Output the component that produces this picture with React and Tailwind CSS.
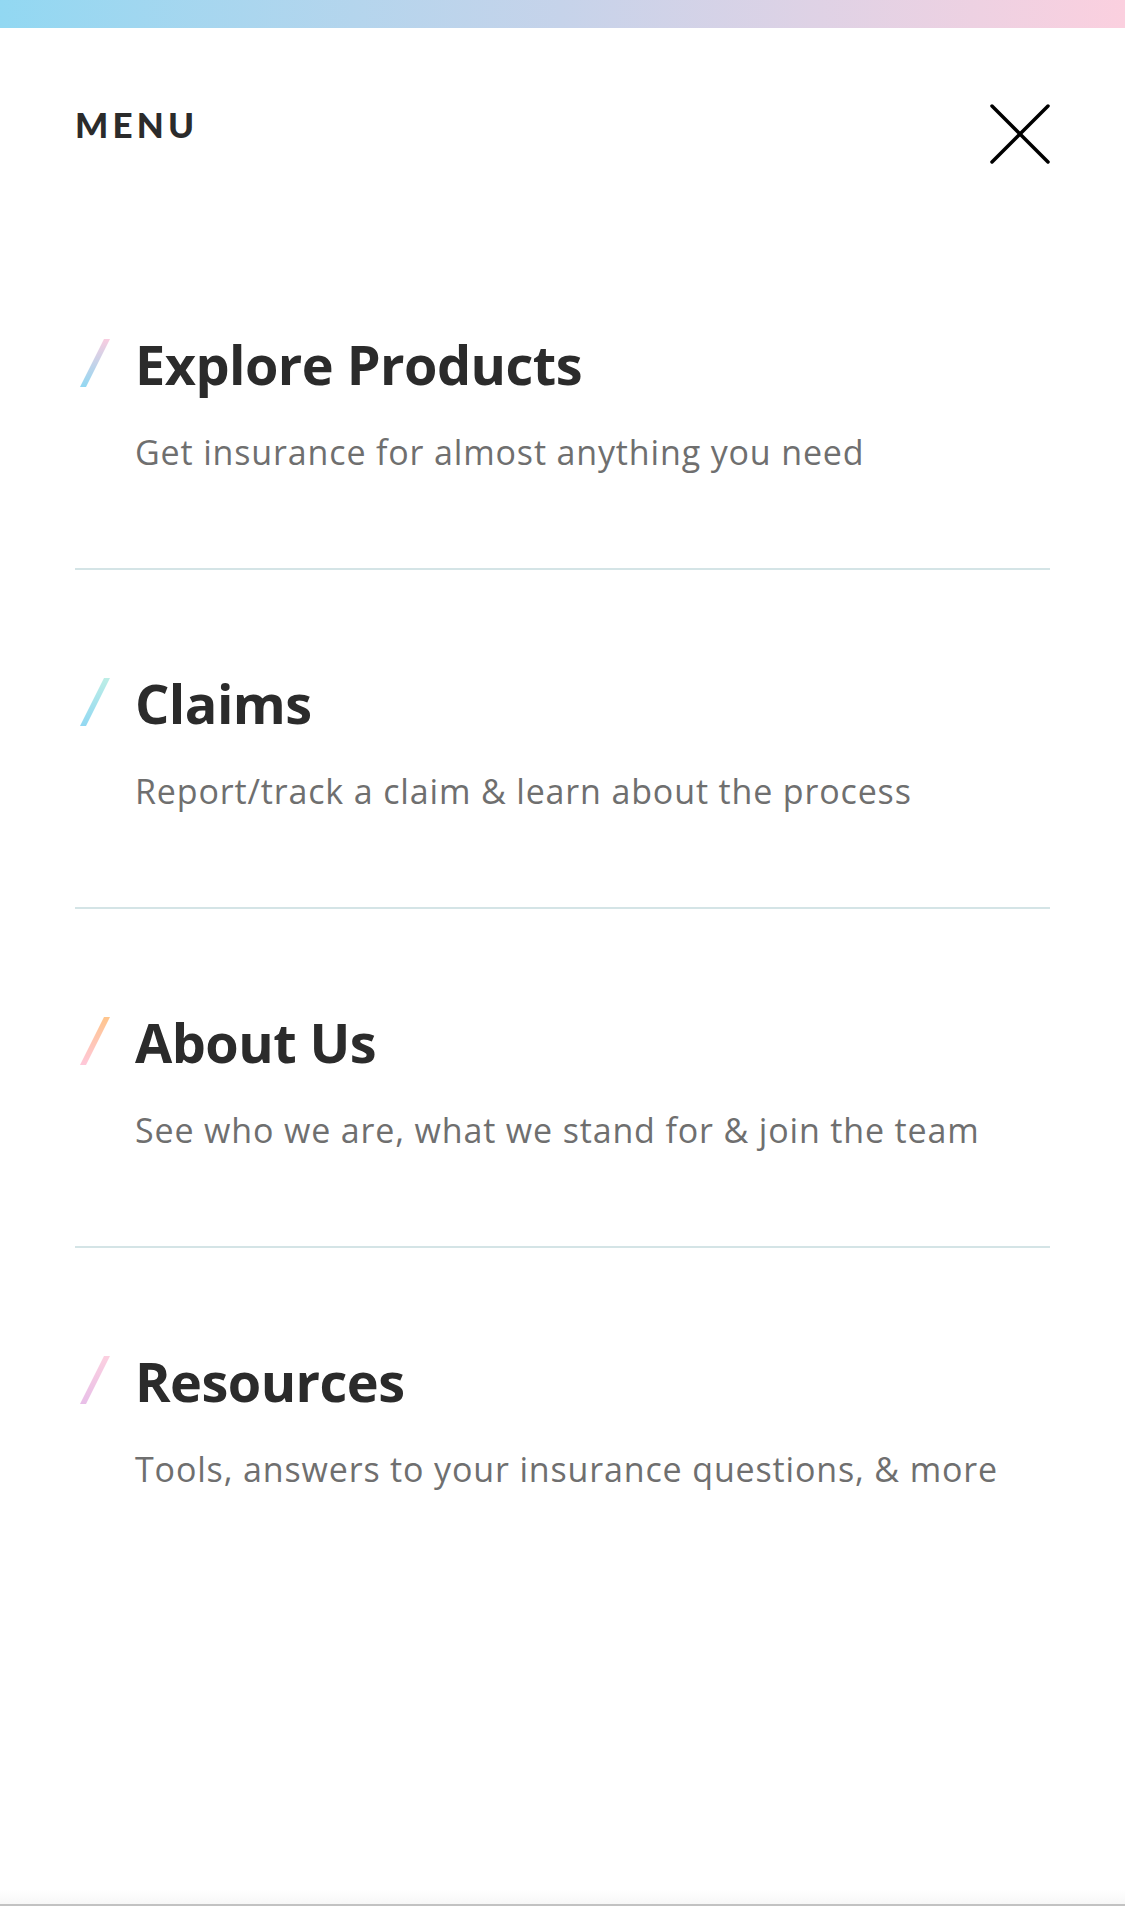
import React from 'react';

const items = [
  { title: 'Explore Products', text: 'Get insurance for almost anything you need', from: '#f9cde0', to: '#92d8f2' },
  { title: 'Claims', text: 'Report/track a claim & learn about the process', from: '#bdeee6', to: '#92d8f2' },
  { title: 'About Us', text: 'See who we are, what we stand for & join the team', from: '#ffc58c', to: '#ffc8da' },
  { title: 'Resources', text: 'Tools, answers to your insurance questions, & more', from: '#fcd0e0', to: '#e8bfe8' },
];

// barra inclinada com degradê antes de cada título
const Slash = ({ id, from, to }) => (
  <svg width="32" height="50" viewBox="0 0 32 50" className="block">
    <defs>
      <linearGradient id={id} x1="0" y1="0" x2="0" y2="1">
        <stop offset="0%" stopColor={from} />
        <stop offset="100%" stopColor={to} />
      </linearGradient>
    </defs>
    <polygon points="25,1 31,1 7,49 1,49" fill={`url(#${id})`} />
  </svg>
);

const MenuItem = ({ item, index, last }) => (
  <div className={`pt-[106px] ${last ? '' : 'pb-[99px] border-b-2 border-[#d4e4e6]'}`}>
    <div className="flex items-start">
      <div className="w-[60px] shrink-0 pt-[1px] pl-[4px]">
        <Slash id={`slash-${index}`} from={item.from} to={item.to} />
      </div>
      <h2 className="text-[54px] leading-none font-bold text-[#2b2b2b] tracking-[-0.01em]">{item.title}</h2>
    </div>
    <p className="pl-[60px] mt-[44px] text-[34px] leading-none tracking-[0.025em] text-[#6f6f6f]">{item.text}</p>
  </div>
);

export default function App() {
  return (
    <div className="h-[1906px] flex flex-col bg-white overflow-hidden" style={{ fontFamily: '"Open Sans", "Noto Sans", sans-serif' }}>
      {/* faixa de degradê no topo */}
      <div className="h-[28px] shrink-0 bg-gradient-to-r from-[#92d8f2] via-[#c6d3ea] to-[#fbd0df]" />

      <div className="px-[75px]">
        {/* cabeçalho */}
        <div className="flex items-start justify-between pt-[76px]">
          <span className="mt-[3px] text-[35px] leading-none font-black tracking-[0.12em] text-[#2b2b2b]" style={{ fontFamily: 'Lato, sans-serif' }}>MENU</span>
          <button aria-label="Fechar" className="w-[60px] h-[60px]">
            <svg width="60" height="60" viewBox="0 0 60 60" fill="none" stroke="#000" strokeWidth="3.5" strokeLinecap="round">
              <line x1="2" y1="2" x2="58" y2="58" />
              <line x1="58" y1="2" x2="2" y2="58" />
            </svg>
          </button>
        </div>

        <div className="mt-[67px]">
          {items.map((item, i) => (
            <MenuItem key={item.title} item={item} index={i} last={i === items.length - 1} />
          ))}
        </div>
      </div>

      <div className="flex-1" />
      <div className="h-[16px] shrink-0 bg-gradient-to-b from-white to-[#f7f7f7] border-b-2 border-[#c2c2c2]" />
    </div>
  );
}
